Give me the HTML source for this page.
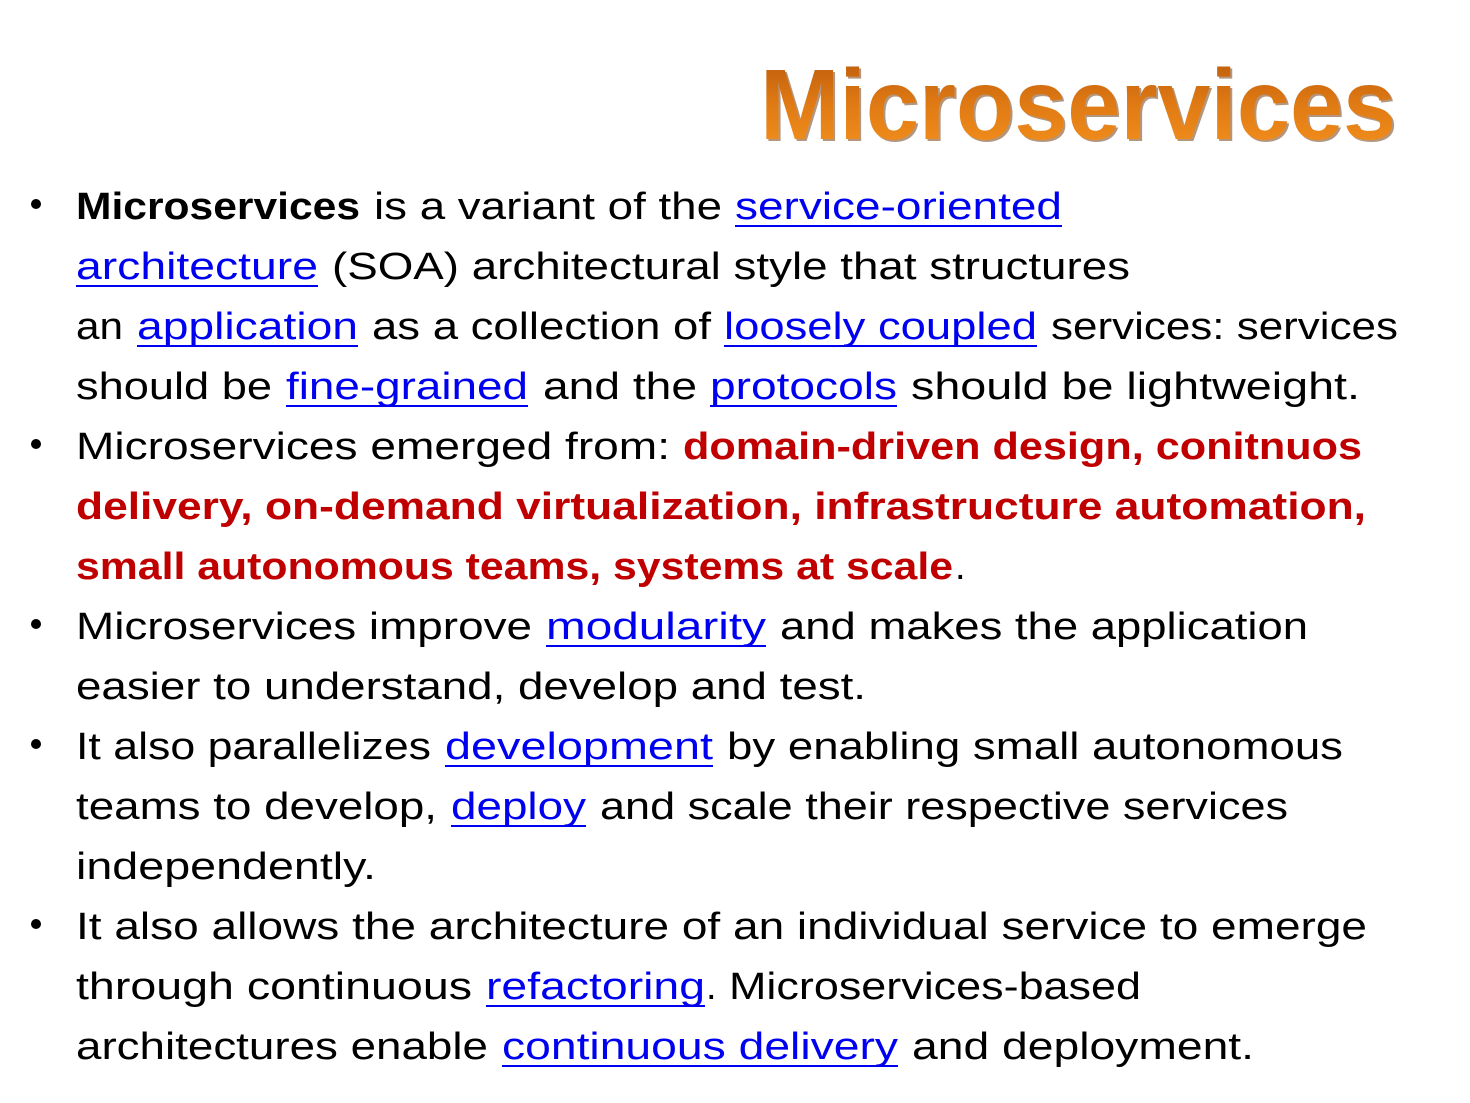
<!DOCTYPE html>
<html><head><meta charset="utf-8"><style>
html,body{margin:0;padding:0;background:#fff;width:1470px;height:1103px;overflow:hidden}
svg{display:block}
text{font-family:"Liberation Sans",sans-serif;font-size:38px;fill:#000}
.b{font-weight:bold}
.l{fill:#0000f0}
.r{fill:#c00000;font-weight:bold}
</style></head><body>
<svg width="1470" height="1103" viewBox="0 0 1470 1103" xmlns="http://www.w3.org/2000/svg">
<defs>
<linearGradient id="g" x1="0" y1="0" x2="0" y2="1">
<stop offset="0" stop-color="#b8580a"/><stop offset="0.5" stop-color="#e07a14"/><stop offset="1" stop-color="#f7941e"/>
</linearGradient>
</defs>
<text x="762" y="141" textLength="636" lengthAdjust="spacingAndGlyphs" style="font-size:100px;font-weight:bold;fill:#6a3000;opacity:0.5">Microservices</text>
<text x="760" y="139" textLength="636" lengthAdjust="spacingAndGlyphs" style="font-size:100px;font-weight:bold;fill:url(#g)">Microservices</text>

<g fill="#000">
<circle cx="36" cy="204" r="5"/><circle cx="36" cy="444" r="5"/><circle cx="36" cy="624" r="5"/><circle cx="36" cy="744" r="5"/><circle cx="36" cy="924" r="5"/>
</g>
<g lengthAdjust="spacingAndGlyphs">
<!-- L1 -->
<text class="b" x="76" y="219" textLength="284" lengthAdjust="spacingAndGlyphs">Microservices</text>
<text x="374" y="219" textLength="348" lengthAdjust="spacingAndGlyphs">is a variant of the</text>
<text class="l" x="735" y="219" textLength="327" lengthAdjust="spacingAndGlyphs">service-oriented</text>
<!-- L2 -->
<text class="l" x="76" y="279" textLength="242" lengthAdjust="spacingAndGlyphs">architecture</text>
<text x="332" y="279" textLength="798" lengthAdjust="spacingAndGlyphs">(SOA) architectural style that structures</text>
<!-- L3 -->
<text x="76" y="339" textLength="47" lengthAdjust="spacingAndGlyphs">an</text>
<text class="l" x="137" y="339" textLength="221" lengthAdjust="spacingAndGlyphs">application</text>
<text x="372" y="339" textLength="339" lengthAdjust="spacingAndGlyphs">as a collection of</text>
<text class="l" x="724" y="339" textLength="313" lengthAdjust="spacingAndGlyphs">loosely coupled</text>
<text x="1051" y="339" textLength="347" lengthAdjust="spacingAndGlyphs">services: services</text>
<!-- L4 -->
<text x="76" y="399" textLength="196" lengthAdjust="spacingAndGlyphs">should be</text>
<text class="l" x="286" y="399" textLength="242" lengthAdjust="spacingAndGlyphs">fine-grained</text>
<text x="543" y="399" textLength="154" lengthAdjust="spacingAndGlyphs">and the</text>
<text class="l" x="710" y="399" textLength="187" lengthAdjust="spacingAndGlyphs">protocols</text>
<text x="911" y="399" textLength="449" lengthAdjust="spacingAndGlyphs">should be lightweight.</text>
<!-- L5 -->
<text x="76" y="459" textLength="594" lengthAdjust="spacingAndGlyphs">Microservices emerged from:</text>
<text class="r" x="683" y="459" textLength="679" lengthAdjust="spacingAndGlyphs">domain-driven design, conitnuos</text>
<!-- L6 -->
<text class="r" x="76" y="519" textLength="1290" lengthAdjust="spacingAndGlyphs">delivery, on-demand virtualization, infrastructure automation,</text>
<!-- L7 -->
<text class="r" x="76" y="579" textLength="877" lengthAdjust="spacingAndGlyphs">small autonomous teams, systems at scale</text>
<text x="955" y="579">.</text>
<!-- L8 -->
<text x="76" y="639" textLength="456" lengthAdjust="spacingAndGlyphs">Microservices improve</text>
<text class="l" x="546" y="639" textLength="220" lengthAdjust="spacingAndGlyphs">modularity</text>
<text x="780" y="639" textLength="528" lengthAdjust="spacingAndGlyphs">and makes the application</text>
<!-- L9 -->
<text x="76" y="699" textLength="790" lengthAdjust="spacingAndGlyphs">easier to understand, develop and test.</text>
<!-- L10 -->
<text x="76" y="759" textLength="355" lengthAdjust="spacingAndGlyphs">It also parallelizes</text>
<text class="l" x="445" y="759" textLength="268" lengthAdjust="spacingAndGlyphs">development</text>
<text x="727" y="759" textLength="616" lengthAdjust="spacingAndGlyphs">by enabling small autonomous</text>
<!-- L11 -->
<text x="76" y="819" textLength="361" lengthAdjust="spacingAndGlyphs">teams to develop,</text>
<text class="l" x="451" y="819" textLength="135" lengthAdjust="spacingAndGlyphs">deploy</text>
<text x="600" y="819" textLength="688" lengthAdjust="spacingAndGlyphs">and scale their respective services</text>
<!-- L12 -->
<text x="76" y="879" textLength="300" lengthAdjust="spacingAndGlyphs">independently.</text>
<!-- L13 -->
<text x="76" y="939" textLength="1291" lengthAdjust="spacingAndGlyphs">It also allows the architecture of an individual service to emerge</text>
<!-- L14 -->
<text x="76" y="999" textLength="396" lengthAdjust="spacingAndGlyphs">through continuous</text>
<text class="l" x="486" y="999" textLength="219" lengthAdjust="spacingAndGlyphs">refactoring</text>
<text x="706" y="999">.</text>
<text x="729" y="999" textLength="412" lengthAdjust="spacingAndGlyphs">Microservices-based</text>
<!-- L15 -->
<text x="76" y="1059" textLength="412" lengthAdjust="spacingAndGlyphs">architectures enable</text>
<text class="l" x="502" y="1059" textLength="396" lengthAdjust="spacingAndGlyphs">continuous delivery</text>
<text x="912" y="1059" textLength="342" lengthAdjust="spacingAndGlyphs">and deployment.</text>
</g>
<g stroke="#0000f0" stroke-width="2">
<line x1="735" y1="226" x2="1062" y2="226"/>
<line x1="76" y1="286" x2="318" y2="286"/>
<line x1="137" y1="346" x2="358" y2="346"/>
<line x1="724" y1="346" x2="1037" y2="346"/>
<line x1="286" y1="406" x2="528" y2="406"/>
<line x1="710" y1="406" x2="897" y2="406"/>
<line x1="546" y1="646" x2="766" y2="646"/>
<line x1="445" y1="766" x2="713" y2="766"/>
<line x1="451" y1="826" x2="586" y2="826"/>
<line x1="486" y1="1006" x2="705" y2="1006"/>
<line x1="502" y1="1066" x2="898" y2="1066"/>
</g>
</svg>
</body></html>
